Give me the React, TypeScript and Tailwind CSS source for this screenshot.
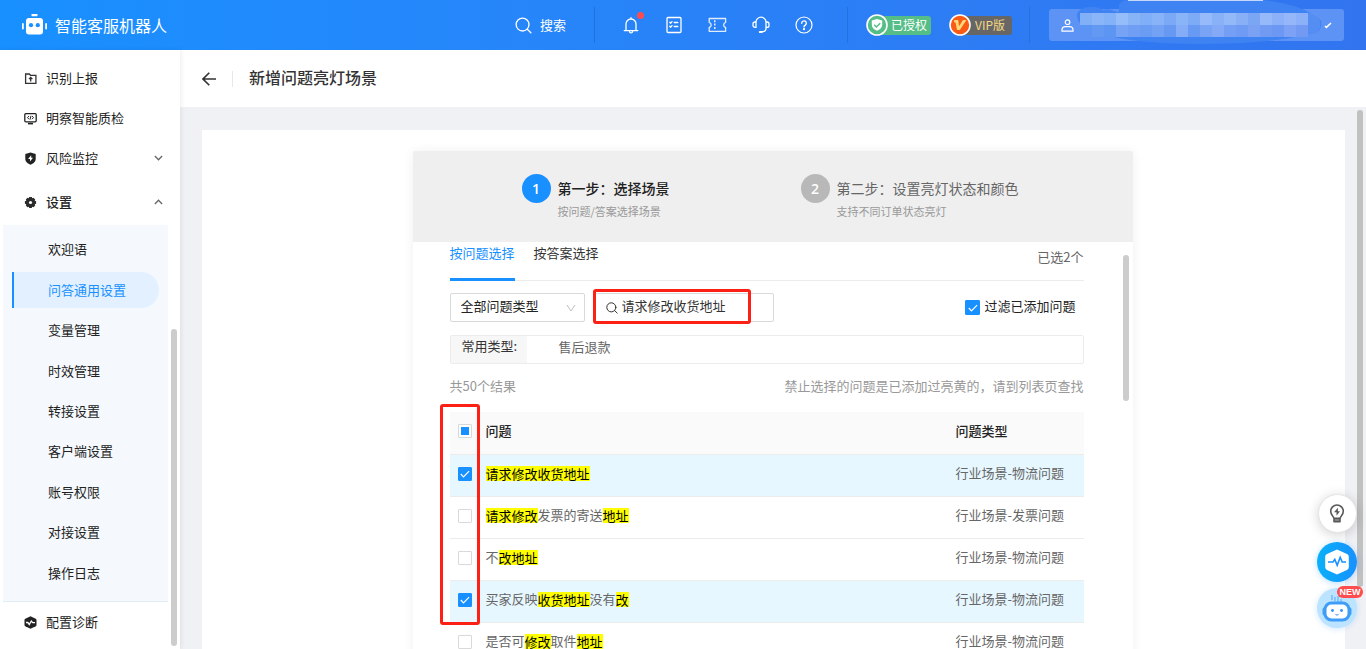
import React, { useState } from "react";

const FONT = "font-['Noto_Sans_CJK_SC','Liberation_Sans',sans-serif]";

type IconProps = { className?: string };

function LogoIcon() {
  return (
    <svg className="h-[22px] w-[26px]" viewBox="0 0 26 22" fill="#fff" aria-hidden="true">
      <rect x="9.5" y="0" width="6" height="2.2" rx="0.6" />
      <rect x="4" y="4" width="17" height="16.5" rx="3" />
      <rect x="0" y="9" width="1.8" height="6.5" rx="0.9" />
      <rect x="23.2" y="9" width="1.8" height="6.5" rx="0.9" />
      <circle cx="9" cy="11.2" r="2.1" fill="#1890ff" />
      <circle cx="15.8" cy="11.2" r="2.1" fill="#1890ff" />
    </svg>
  );
}

function SearchIcon({ className }: IconProps) {
  return (
    <svg className={className} viewBox="0 0 18 18" fill="none" stroke="currentColor" strokeWidth="1.4" strokeLinecap="round" aria-hidden="true">
      <circle cx="8" cy="8" r="6.8" />
      <path d="M13 13l3.8 3.6" />
    </svg>
  );
}

function BellIcon() {
  return (
    <svg className="size-[18px]" viewBox="0 0 18 18" fill="none" stroke="#fff" strokeWidth="1.3" strokeLinecap="round" strokeLinejoin="round" aria-hidden="true">
      <path d="M2.2 14.6h13.6M4 14.4V8a5 5 0 0 1 10 0v6.4M9 1.6v1.2M7.5 15.4a1.5 1.5 0 0 0 3 0" />
    </svg>
  );
}

function ListIcon() {
  return (
    <svg className="size-[18px]" viewBox="0 0 18 18" fill="none" stroke="#fff" strokeWidth="1.3" strokeLinecap="round" strokeLinejoin="round" aria-hidden="true">
      <rect x="2" y="1.5" width="14" height="15" rx="1" />
      <path d="M4.800 6.300l.9.900 1.300-1.600M4.800 10.300l.9.900 1.300-1.600M9.200 6.500h3.600M9.200 10.500h3.600" />
    </svg>
  );
}

function TicketIcon() {
  return (
    <svg className="h-[18px] w-[19px]" viewBox="0 0 19 18" fill="none" stroke="#fff" strokeWidth="1.3" strokeLinejoin="round" aria-hidden="true">
      <path d="M1.200 2.500h16.400v3.800a2.700 2.700 0 0 0 0 5.200v3.800H1.200v-3.800a2.700 2.700 0 0 0 0-5.200z" opacity="0.85" />
      <path d="M6.800 4.200v9.600" strokeDasharray="2 1.400" />
    </svg>
  );
}

function HeadsetIcon() {
  return (
    <svg className="size-[18px]" viewBox="0 0 18 18" fill="none" stroke="#fff" strokeWidth="1.3" strokeLinecap="round" strokeLinejoin="round" aria-hidden="true">
      <path d="M4 6.200a5 5 0 0 1 10 0M4 6v5.400H3a2 2 0 0 1-2-2V8a2 2 0 0 1 2-2zM14 6v5.400h1a2 2 0 0 0 2-2V8a2 2 0 0 0-2-2zM14 11.400v1.200a3 3 0 0 1-3 3H9" />
      <path d="M7.800 15.900h2" strokeWidth="2" />
    </svg>
  );
}

function HelpIcon() {
  return (
    <svg className="size-[18px]" viewBox="0 0 18 18" fill="none" stroke="#fff" strokeWidth="1.2" strokeLinecap="round" aria-hidden="true">
      <circle cx="9" cy="9" r="8" />
      <path d="M6.7 7.2a2.3 2.3 0 1 1 3.6 1.9c-.8.5-1.3.9-1.3 1.8" strokeWidth="1.4" />
      <circle cx="9" cy="13.2" r="0.5" fill="#fff" />
    </svg>
  );
}

function FolderIcon() {
  return (
    <svg className="size-[13px]" viewBox="0 0 13 13" fill="none" stroke="#333" strokeWidth="1.3" aria-hidden="true">
      <path d="M1.6 11.400V2h3.700l1.200 1.300h5.400v8.100zM6.700 9.400V5.500M5 7.100l1.700-1.700 1.700 1.700" />
    </svg>
  );
}

function MonitorIcon() {
  return (
    <svg className="size-[13px]" viewBox="0 0 13 13" fill="none" stroke="#222" strokeWidth="1.3" aria-hidden="true">
      <rect x="0.8" y="1.6" width="11.4" height="8.2" rx="1" />
      <path d="M4 11.6h5" strokeWidth="1.6" />
      <path d="M5 4L3.5 5.6 5 7.2M8 4l1.5 1.6L8 7.2M7 3.8L6 7.6" strokeWidth="1" />
    </svg>
  );
}

function ShieldIcon() {
  return (
    <svg className="size-[13px]" viewBox="0 0 13 13" aria-hidden="true">
      <path d="M6.5.4l5.2 1.7v5c0 2.9-2.6 4.6-5.2 5.6-2.6-1-5.2-2.7-5.2-5.6v-5z" fill="#222" />
      <path d="M7.2 3.2L4 7h2v2.6l3-3.8H7.2z" fill="#fff" />
    </svg>
  );
}

function GearIcon() {
  return (
    <svg className="size-[13px]" viewBox="0 0 13 13" aria-hidden="true">
      <path d="M5.2 1h2.6l.4 1.2 1.3-.5 1.7 1.8-.5 1.2 1.4.5v2.6l-1.4.5.5 1.2-1.7 1.8-1.3-.5-.4 1.3H5.2l-.4-1.3-1.3.5-1.7-1.8.5-1.2-1.4-.5V5.2l1.400-.5-.5-1.200 1.700-1.800 1.300.5z" fill="#2b2b2b" />
      <circle cx="6.5" cy="6.5" r="1.6" fill="#fff" />
    </svg>
  );
}

function DiagnoseIcon() {
  return (
    <svg className="size-[13px]" viewBox="0 0 13 13" aria-hidden="true">
      <path d="M6.5.2l5.2 2.5q.8.4.8 1.2v5.2q0 .8-.8 1.2l-5.2 2.5-5.2-2.5q-.8-.4-.8-1.2V3.900q0-.8.8-1.2z" fill="#222" />
      <path d="M2 6.5h1.800l1.500 2L7.300 5l1.500 1.700H11" fill="none" stroke="#fff" strokeWidth="1.3" />
    </svg>
  );
}

function Chevron({ up }: { up?: boolean }) {
  return (
    <svg className="h-2 w-[9px]" viewBox="0 0 9 8" fill="none" stroke="#666" strokeWidth="1.3" aria-hidden="true">
      <path d={up ? "M0.900 6L4.500 2.300 8.100 6" : "M0.900 2L4.500 5.700 8.100 2"} />
    </svg>
  );
}

function Checkbox({ checked, partial, label, onChange, size }: { checked: boolean; partial?: boolean; label: string; onChange: () => void; size: "sm" | "md" }) {
  const box = size === "md" ? "size-[15px]" : "size-[14px]";
  return (
    <span className={`grid shrink-0 place-items-center ${box}`}>
      <input
        type="checkbox"
        aria-label={label}
        checked={checked}
        onChange={onChange}
        className={`col-start-1 row-start-1 appearance-none rounded-[1px] border border-[#d9d9d9] bg-white checked:border-[#1890ff] checked:bg-[#1890ff] ${box}`}
      />
      {partial && !checked && <span className="pointer-events-none col-start-1 row-start-1 size-2 bg-[#1890ff]" />}
      {checked && (
        <svg className="pointer-events-none col-start-1 row-start-1 size-[10px]" viewBox="0 0 10 10" fill="none" stroke="#fff" strokeWidth="1.200" aria-hidden="true">
          <path d="M0.800 5l2.700 2.800 5.600-5.600" />
        </svg>
      )}
    </span>
  );
}

const MOSAIC_TOP = ["#82b0f7", "#8ab5f8", "#84b2f8", "#95bdfa", "#87b3f7", "#80aef7", "#89b3f8", "#7ba9f5", "#8ab4f8", "#7eabf5", "#96bafa", "#89b1f7", "#94b9f9", "#89b0f7", "#7ba6f4", "#96b9f9", "#8cb1f8", "#95b7f9", "#8db1f8"];
const MOSAIC_BOTTOM = ["#5b95f3", "#6399f3", "#5d95f2", "#76a3f5", "#6f9ef4", "#6b9cf4", "#73a1f4", "#6799f3", "#84acf7", "#699af3", "#79a3f5", "#84a9f7", "#749ff4", "#709bf4", "#7ba1f5", "#719bf3", "#6c97f3", "#7ca1f5", "#739af3"];

function AccountMask() {
  return (
    <svg className="pointer-events-none absolute -top-[9px] left-[28px] h-[46px] w-[250px]" viewBox="0 0 250 46" aria-hidden="true">
      <path d="M0 14C2 7 18 4 26 10C34 7 38 13 42 12V5Q44 0 52 0H185Q218 3 235 14Q248 19 243 29Q240 35 227 35Q190 44 122 44Q42 44 9 28Q-1 22 0 14Z" fill="#3f82f1" />
      <path d="M227 13h10q8 5 6 15-3 8-14 8h-2z" fill="#6396f4" opacity="0.6" />
      {MOSAIC_TOP.map((c, i) => (
        <rect key={`t${i}`} x={3 + i * 12} y="13" width="12" height="12" fill={c} />
      ))}
      {MOSAIC_BOTTOM.slice(1).map((c, i) => (
        <rect key={`b${i}`} x={15 + i * 12} y="25" width="12" height="12" fill={c} />
      ))}
      <path d="M3 25h12v7L3 25z" fill={MOSAIC_BOTTOM[0]} />
      <rect x="51" y="0" width="135" height="1" fill="#c5d8fb" />
    </svg>
  );
}

function TopBar() {
  const divider = "h-9 w-px bg-[#2272dc]";
  return (
    <header className="flex h-[50px] shrink-0 items-center bg-linear-to-r from-[#1890ff] to-[#3274f0] pr-[22px] pl-[22px] text-white">
      <LogoIcon />
      <span className="ml-[7px] text-[16px] leading-6">智能客服机器人</span>
      <div className="ml-auto flex items-center">
        <button type="button" className="flex items-center gap-2 text-[13px] leading-5">
          <SearchIcon className="size-[17px]" />
          搜索
        </button>
        <span className={`ml-7 ${divider}`} />
        <div className="mr-[34px] ml-[27px] flex items-center gap-[25px]">
          <button type="button" aria-label="通知" className="relative">
            <BellIcon />
            <span className="absolute -top-1 -right-1 size-[7px] rounded-full bg-[#ff4d4f]" />
          </button>
          <button type="button" aria-label="任务"><ListIcon /></button>
          <button type="button" aria-label="工单"><TicketIcon /></button>
          <button type="button" aria-label="客服"><HeadsetIcon /></button>
          <button type="button" aria-label="帮助"><HelpIcon /></button>
        </div>
        <span className={divider} />
        <div className="ml-[18px] flex items-center">
          <svg className="z-10 size-[22px]" viewBox="0 0 22 22" aria-hidden="true">
            <circle cx="11" cy="11" r="10" fill="#55bd86" stroke="#fff" strokeWidth="1.600" />
            <path d="M11 5l5.200 1.500v4.300c0 3-2.400 4.700-5.200 6-2.800-1.300-5.200-3-5.200-6V6.500z" fill="#fff" />
            <path d="M8.200 10.800l2.200 2.200 3.800-3.800" fill="none" stroke="#55bd86" strokeWidth="1.500" />
          </svg>
          <span className="-ml-2 flex h-[19px] items-center rounded-[3px] bg-[#55bd86] pr-1 pl-[11px] text-[12px]">已授权</span>
        </div>
        <div className="ml-[18px] flex items-center">
          <svg className="z-10 size-[22px]" viewBox="0 0 22 22" aria-hidden="true">
            <circle cx="11" cy="11" r="10" fill="#fa5a14" stroke="#fff" strokeWidth="1.600" />
            <path d="M5 6h4.200l.8 6.200L14 6h3.400l-6.600 10H8L6.600 8.400H5.400z" fill="#ffd97a" />
          </svg>
          <span className="-ml-2 flex h-[19px] items-center rounded-[3px] bg-[#666666] pr-[7px] pl-3 text-[12px] text-[#f5d982]">VIP版</span>
        </div>
        <span className={`ml-[17px] ${divider}`} />
        <button type="button" aria-label="账号" className="relative ml-[19px] flex h-8 w-[295px] items-center justify-between rounded-[3px] bg-[#5c93f4] px-3">
          <AccountMask />
          <svg className="size-[13px]" viewBox="0 0 13 13" fill="none" stroke="#fff" strokeWidth="1.200" aria-hidden="true">
            <circle cx="6.500" cy="3.200" r="2.300" />
            <path d="M1 12.200v-1.500a3.200 3.200 0 0 1 3.200-3h4.600a3.200 3.200 0 0 1 3.200 3v1.500z" />
          </svg>
          <svg className="relative h-[7px] w-2" viewBox="0 0 8 7" fill="none" stroke="#fff" strokeWidth="1.500" aria-hidden="true">
            <path d="M1 4l1.400 1.400L7 1" />
          </svg>
        </button>
      </div>
    </header>
  );
}

const SUB_ITEMS = ["欢迎语", "问答通用设置", "变量管理", "时效管理", "转接设置", "客户端设置", "账号权限", "对接设置", "操作日志"];

function NavRow({ icon, text, chevron }: { icon: React.ReactNode; text: string; chevron?: boolean }) {
  return (
    <a href="#" className="flex h-10 items-center pr-[17px] pl-6">
      {icon}
      <span className="ml-[9px]">{text}</span>
      {chevron && <span className="ml-auto"><Chevron /></span>}
    </a>
  );
}

function Sidebar() {
  return (
    <aside className="relative z-10 w-[180px] shrink-0 overflow-hidden bg-white pt-2 text-[13px] leading-5 text-[#222] shadow-[1px_0_5px_rgba(0,0,0,0.08)]">
      <nav>
        <NavRow icon={<FolderIcon />} text="识别上报" />
        <NavRow icon={<MonitorIcon />} text="明察智能质检" />
        <NavRow icon={<ShieldIcon />} text="风险监控" chevron />
        <button type="button" className="flex h-[47px] w-full items-center pt-px pr-[17px] pl-6 font-medium">
          <GearIcon />
          <span className="ml-[9px]">设置</span>
          <span className="ml-auto"><Chevron up /></span>
        </button>
        <div className="mr-3 ml-[3px] grid h-[377px] auto-rows-fr border-b border-[#e3edf5] bg-[#f5f9fd] pt-1 pb-2">
          {SUB_ITEMS.map((item) => (
            <a
              key={item}
              href="#"
              className={
                item === "问答通用设置"
                  ? "mr-[9px] ml-[9px] flex h-9 items-center self-center rounded-r-full border-l-2 border-[#1890ff] bg-[#e2f0ff] pl-[34px] text-[#1890ff]"
                  : "flex items-center pl-[45px]"
              }
            >
              {item}
            </a>
          ))}
        </div>
        <NavRow icon={<DiagnoseIcon />} text="配置诊断" />
      </nav>
      <span className="absolute right-[3px] bottom-[3px] h-[317px] w-[6px] rounded-full bg-[#cccccc]" />
    </aside>
  );
}

type Part = [string, boolean];
const ROWS: { parts: Part[]; type: string; checked: boolean }[] = [
  { parts: [["请求修改收货地址", true]], type: "行业场景-物流问题", checked: true },
  { parts: [["请求修改", true], ["发票的寄送", false], ["地址", true]], type: "行业场景-发票问题", checked: false },
  { parts: [["不", false], ["改地址", true]], type: "行业场景-物流问题", checked: false },
  { parts: [["买家反映", false], ["收货地址", true], ["没有", false], ["改", true]], type: "行业场景-物流问题", checked: true },
  { parts: [["是否可", false], ["修改", true], ["取件", false], ["地址", true]], type: "行业场景-物流问题", checked: false },
];

function QuestionTable() {
  const [picked, setPicked] = useState(ROWS.map((r) => r.checked));
  const all = picked.every(Boolean);
  const toggle = (i: number) => setPicked(picked.map((p, n) => (n === i ? !p : p)));
  return (
    <div className="relative mt-4">
      <table className="w-full table-fixed border-collapse text-left">
        <colgroup>
          <col className="w-9" />
          <col />
          <col className="w-32" />
        </colgroup>
        <thead>
          <tr className="h-[42px] border-b border-[#ececec] bg-[#fafafa] text-[#222]">
            <th className="pb-[3px] pl-2">
              <Checkbox size="sm" checked={all} partial label="全选" onChange={() => setPicked(picked.map(() => !all))} />
            </th>
            <th className="pb-1 font-medium">问题</th>
            <th className="pb-1 font-medium">问题类型</th>
          </tr>
        </thead>
        <tbody>
          {ROWS.map((row, i) => (
            <tr key={i} className={`h-[42px] border-b border-[#ececec] ${picked[i] ? "bg-[#e6f7ff]" : ""}`}>
              <td className="pb-[3px] pl-2">
                <Checkbox size="sm" checked={picked[i]} label={row.parts.map((p) => p[0]).join("")} onChange={() => toggle(i)} />
              </td>
              <td className="pb-1 text-[#666]">
                <div className="flex items-center">
                  {row.parts.map(([text, hit], n) =>
                    hit ? <mark key={n} className="bg-[#ffff00] leading-[15px] text-black">{text}</mark> : <span key={n}>{text}</span>,
                  )}
                </div>
              </td>
              <td className="pb-1 text-[#666]">{row.type}</td>
            </tr>
          ))}
        </tbody>
      </table>
      <span className="pointer-events-none absolute -top-2 -left-[10px] h-[221px] w-10 rounded-[3px] border-3 border-[#fd2015]" />
    </div>
  );
}

function Step({ index, title, note, active }: { index: number; title: string; note: string; active?: boolean }) {
  return (
    <li className="flex gap-[7px]">
      <span className={`flex size-[29px] items-center justify-center rounded-full font-['Open_Sans','Noto_Sans_CJK_SC',sans-serif] text-[14px] font-semibold text-white ${active ? "bg-[#1890ff]" : "bg-[#b8b8b8]"}`}>{index}</span>
      <div>
        <div className={`text-[14px] leading-[29px] ${active ? "font-medium text-[#222]" : "text-[#666]"}`}>{title}</div>
        <div className="text-[11px] leading-4 text-[#999]">{note}</div>
      </div>
    </li>
  );
}

function ScenePanel() {
  const [filtered, setFiltered] = useState(true);
  return (
    <section className="mx-auto w-[720px] max-w-full rounded-[2px] bg-white shadow-[0_0_12px_rgba(0,0,0,0.06)]">
      <ol className="flex h-[91px] gap-[131px] rounded-t-[2px] bg-[#efefef] pt-[23px] pl-[109px]">
        <Step index={1} title="第一步：选择场景" note="按问题/答案选择场景" active />
        <Step index={2} title="第二步：设置亮灯状态和颜色" note="支持不同订单状态亮灯" />
      </ol>
      <div className="relative pr-[49px] pl-[37px] text-[13px] leading-[18px] text-[#333]">
        <div className="flex h-[39px] items-start border-b border-[#ececec]">
          <button type="button" className="h-[39px] border-b-3 border-[#1890ff] pt-[2px] pb-4 leading-[18px] text-[#1890ff]">按问题选择</button>
          <button type="button" className="ml-[19px] pt-[2px]">按答案选择</button>
          <span className="ml-auto pt-[6px] text-[#666]">已选2个</span>
        </div>
        <div className="mt-3 flex items-center">
          <div className="grid w-[135px] items-center">
            <select aria-label="问题类型" className="col-start-1 row-start-1 h-[29px] w-full appearance-none rounded-[2px] border border-[#d9d9d9] bg-white pb-1 pl-[10px] text-[#222]">
              <option>全部问题类型</option>
            </select>
            <svg className="pointer-events-none col-start-1 row-start-1 mr-[9px] size-[10px] justify-self-end" viewBox="0 0 10 10" fill="none" stroke="#bfbfbf" aria-hidden="true">
              <path d="M1 2l4 6 4-6" />
            </svg>
          </div>
          <div className="relative ml-2 flex h-[29px] w-[181px] items-center rounded-[2px] border border-[#d9d9d9] pl-3">
            <SearchIcon className="size-3 text-[#222]" />
            <input aria-label="搜索问题" defaultValue="请求修改收货地址" className="ml-1 h-6 w-36 bg-transparent pb-1 text-[#333] outline-none" />
            <span className="pointer-events-none absolute -top-[5px] -left-px h-[35px] w-[158px] rounded-[3px] border-3 border-[#fd2015]" />
          </div>
          <label className="mr-2 ml-auto flex items-center gap-1 text-[#222]">
            <Checkbox size="md" checked={filtered} label="过滤已添加问题" onChange={() => setFiltered(!filtered)} />
            <span className="pb-[3px]">过滤已添加问题</span>
          </label>
        </div>
        <div className="mt-[13px] flex h-[29px] rounded-[2px] border border-[#ececec]">
          <span className="w-[76px] bg-[#f7f7f7] pt-px pl-[11px]">常用类型:</span>
          <button type="button" className="ml-8 pb-[6px] text-[#666]">售后退款</button>
        </div>
        <div className="mt-[13px] flex justify-between text-[#999]">
          <span>共50个结果</span>
          <span>禁止选择的问题是已添加过亮黄的，请到列表页查找</span>
        </div>
        <div className="pt-px">
          <QuestionTable />
        </div>
        <span className="absolute top-[13px] right-1 h-[146px] w-[6px] rounded-full bg-[#cccccc]" />
      </div>
    </section>
  );
}

function FloatingTools() {
  return (
    <div className="absolute right-[9px] bottom-[21px] z-20 flex w-10 flex-col items-center gap-[9px]">
      <button type="button" aria-label="建议" className="flex size-[39px] items-center justify-center rounded-full border border-[#e4e4e4] bg-white shadow-[0_2px_12px_rgba(0,0,0,0.18)]">
        <svg className="h-5 w-4" viewBox="0 0 16 20" fill="none" stroke="#595959" strokeWidth="1.600" strokeLinejoin="round" aria-hidden="true">
          <path d="M5 14.300C4.800 12.300 1.700 11.400 1.700 7.300a6.300 6.300 0 0 1 12.600 0c0 4.100-3.100 5-3.300 7z" />
          <path d="M5 14.300v3.500h6v-3.500M5 16h6" />
          <path d="M8.900 3.800L5 8.300h2.500v3.500L11 7.200H8.900z" fill="#595959" stroke="none" />
        </svg>
      </button>
      <button type="button" aria-label="诊断" className="flex size-10 items-center justify-center rounded-full bg-linear-to-r from-[#0bb0f8] to-[#1890ff] shadow-[0_1px_6px_rgba(24,144,255,0.3)]">
        <svg className="h-[26px] w-6" viewBox="0 0 24 26" aria-hidden="true">
          <path d="M12 .5l10 4.600q1.800.8 1.800 2.600v10.600q0 1.800-1.800 2.600L12 25.500 2 20.900Q.2 20.100.2 18.300V7.700Q.2 5.900 2 5.100z" fill="#fff" />
          <path d="M3 13h5l1.800-2.500 2.400 5.800 3-8 2 4.700H21" fill="none" stroke="#1890ff" strokeWidth="1.600" />
        </svg>
      </button>
      <button type="button" aria-label="智能助手" className="relative -mt-[3px] flex size-10 items-center justify-center rounded-full bg-[#bce3ff] shadow-[0_1px_6px_rgba(24,144,255,0.2)]">
        <svg className="size-8" viewBox="0 0 32 32" aria-hidden="true">
          <path d="M11 3v5M14 5v4M17 4v6M20 7v3" stroke="#57adf8" strokeWidth="1.500" opacity="0.700" />
          <rect x="1.500" y="15" width="29" height="9" rx="3" fill="#3f9df8" />
          <rect x="4" y="11" width="24" height="17" rx="6.500" fill="#fff" stroke="#3f9df8" strokeWidth="3" />
          <circle cx="11.500" cy="18.500" r="1.400" fill="#2f92f7" />
          <circle cx="20.500" cy="18.500" r="1.400" fill="#2f92f7" />
          <path d="M14.500 22.500q1.500 1.200 3 0" stroke="#2f92f7" fill="none" />
        </svg>
        <span className="absolute -top-[2px] left-5 flex h-3 w-[26px] items-center justify-center rounded-full bg-[#ff4d4f] font-['Liberation_Sans',sans-serif] text-[9px] leading-3 font-bold text-white">NEW</span>
      </button>
    </div>
  );
}

export default function App() {
  return (
    <div className={`relative flex h-screen flex-col overflow-hidden bg-[#f0f1f5] ${FONT}`}>
      <TopBar />
      <div className="flex min-h-0 flex-1">
        <Sidebar />
        <main className="relative flex min-w-0 flex-1 flex-col">
          <div className="flex h-[57px] shrink-0 items-center bg-white pl-[22px]">
            <button type="button" aria-label="返回">
              <svg className="size-[14px]" viewBox="0 0 14 14" fill="none" stroke="#333" strokeWidth="1.600" aria-hidden="true">
                <path d="M14 7H1M7.300.700L1 7l6.300 6.300" />
              </svg>
            </button>
            <span className="mr-4 ml-4 h-4 w-px bg-[#e8e8e8]" />
            <h1 className="pb-[3px] text-[16px] leading-6 font-medium text-[#333]">新增问题亮灯场景</h1>
          </div>
          <div className="mt-[23px] mr-[21px] ml-[22px] min-h-0 flex-1 overflow-hidden bg-white pt-[21px] pr-[2px]">
            <ScenePanel />
          </div>
          <span className="absolute top-[60px] right-[3px] h-[477px] w-[6px] rounded-full bg-[#c1c1c1]" />
        </main>
      </div>
      <FloatingTools />
    </div>
  );
}
